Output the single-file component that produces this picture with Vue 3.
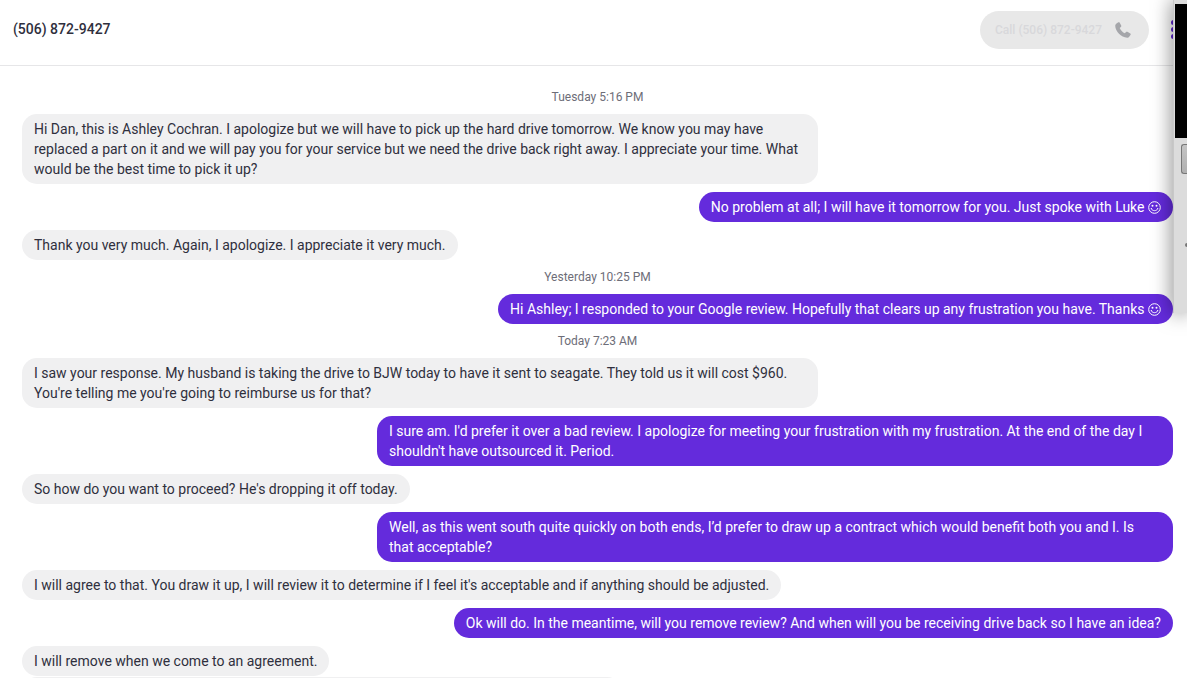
<script setup>
const phone = '(506) 872-9427'
const entries = [
  { kind: 'date', text: 'Tuesday 5:16 PM' },
  { kind: 'in', text: 'Hi Dan, this is Ashley Cochran. I apologize but we will have to pick up the hard drive tomorrow. We know you may have replaced a part on it and we will pay you for your service but we need the drive back right away. I appreciate your time. What would be the best time to pick it up?' },
  { kind: 'out', text: 'No problem at all; I will have it tomorrow for you. Just spoke with Luke', smile: true },
  { kind: 'in', text: 'Thank you very much. Again, I apologize. I appreciate it very much.' },
  { kind: 'date', text: 'Yesterday 10:25 PM' },
  { kind: 'out', text: 'Hi Ashley; I responded to your Google review. Hopefully that clears up any frustration you have. Thanks', smile: true },
  { kind: 'date', text: 'Today 7:23 AM' },
  { kind: 'in', text: "I saw your response. My husband is taking the drive to BJW today to have it sent to seagate. They told us it will cost $960. You're telling me you're going to reimburse us for that?" },
  { kind: 'out', text: "I sure am. I'd prefer it over a bad review. I apologize for meeting your frustration with my frustration. At the end of the day I shouldn't have outsourced it. Period." },
  { kind: 'in', text: "So how do you want to proceed? He's dropping it off today." },
  { kind: 'out', text: 'Well, as this went south quite quickly on both ends, I’d prefer to draw up a contract which would benefit both you and I. Is that acceptable?' },
  { kind: 'in', text: "I will agree to that. You draw it up, I will review it to determine if I feel it's acceptable and if anything should be adjusted." },
  { kind: 'out', text: 'Ok will do. In the meantime, will you remove review? And when will you be receiving drive back so I have an idea?' },
  { kind: 'in', text: 'I will remove when we come to an agreement.' },
  { kind: 'next', text: '' }
]
</script>

<template>
  <div class="app">
    <header class="header">
      <h1 class="title">{{ phone }}</h1>
      <button class="call" type="button" disabled>
        <span>Call {{ phone }}</span>
        <svg class="phone" viewBox="0 0 16 16" aria-hidden="true">
          <path d="M1.2 1.7 3.3.3C3.8 0 4.3.1 4.6.6L6.2 3.5C6.5 4 6.4 4.5 5.9 4.9L4.7 5.9C5.5 8 7.7 10.3 9.9 11.3L11 10C11.4 9.6 11.9 9.5 12.4 9.8L15.3 11.5C15.8 11.8 15.9 12.3 15.6 12.8L14.2 14.8C13.8 15.5 13 15.9 12.2 15.8C6 15.4.5 9.8.2 3.8C.2 3 .5 2.2 1.2 1.7Z" />
        </svg>
      </button>
      <button class="more" type="button" aria-label="More options"><i /><i /><i /></button>
    </header>

    <main class="thread">
      <template v-for="(entry, i) in entries" :key="i">
        <time v-if="entry.kind === 'date'" class="date">{{ entry.text }}</time>
        <p v-else class="bubble" :class="entry.kind">{{ entry.text }}<template v-if="entry.smile">&nbsp;<svg class="smile" viewBox="0 0 13 13" role="img" aria-label="smile">
            <circle class="line" cx="6.5" cy="6.5" r="5.8" />
            <path class="line" d="M3.4 7.7C4.3 10.3 8.7 10.3 9.6 7.7M2.8 7.7H4M9 7.7H10.2" />
            <circle cx="4.5" cy="4.7" r="1" /><circle cx="8.5" cy="4.7" r="1" />
          </svg></template></p>
      </template>
    </main>

    <aside class="window">
      <div class="screen"></div>
      <button class="key" type="button" aria-label="Window control"></button>
      <span class="knob"></span>
    </aside>
  </div>
</template>

<style>
body { margin: 0; background: #fff; }
</style>

<style scoped>
.app {
  position: relative;
  display: flex;
  flex-direction: column;
  height: 100vh;
  overflow: hidden;
  background: #fff;
  color: #2f2f3d;
  font-family: Roboto, "Liberation Sans", sans-serif;
  font-size: 14px;
  line-height: 20px;
}
.header {
  display: flex;
  flex: none;
  align-items: center;
  box-sizing: border-box;
  height: 66px;
  padding: 0 14px 6px 13px;
  border-bottom: 1px solid #e6e6e8;
}
.title {
  flex: 1;
  margin: 0;
  padding-bottom: 2px;
  font-size: 14px;
  font-weight: 500;
}
.call {
  display: flex;
  align-items: center;
  gap: 13px;
  height: 38px;
  padding: 0 18px 0 15px;
  border: 0;
  border-radius: 19px;
  background: #e8e8e8;
  color: #d8d8db;
  font: 500 12px/16px Roboto, "Liberation Sans", sans-serif;
}
.phone { width: 16px; height: 16px; fill: #a5a6aa; }
.more {
  display: flex;
  flex-direction: column;
  gap: 2px;
  width: 3px;
  margin-left: 22px;
  margin-right: -1px;
  padding: 0;
  border: 0;
  background: none;
}
.more i { width: 5px; height: 5px; border-radius: 50%; background: #5b22d0; }
.thread {
  display: flex;
  flex-direction: column;
  align-items: flex-start;
  gap: 8px;
  padding: 22px 14px 0 22px;
}
.date {
  align-self: center;
  color: #6d6d78;
  font-size: 12px;
  line-height: 18px;
}
.bubble {
  box-sizing: border-box;
  flex: none;
  max-width: 796px;
  margin: 0;
  padding: 5px 12px;
  border-radius: 15px;
}
.in, .next { background: #f0f0f1; }
.out { align-self: flex-end; background: #642bdc; color: #fff; }
.next { width: 600px; height: 30px; margin-top: -7px; }
.smile { width: 13px; height: 13px; vertical-align: -2px; fill: #fff; }
.line { fill: none; stroke: #fff; stroke-width: 1; }
.window {
  position: absolute;
  top: 0;
  right: 0;
  box-sizing: border-box;
  width: 14px;
  height: 313px;
  padding-top: 4px;
  border-left: 1px solid #c8c8c8;
  background: #dcdcdc;
  box-shadow: 0 0 20px rgba(0, 0, 0, 0.55);
}
.screen { height: 134px; margin-left: 1px; background: #000; }
.key {
  display: block;
  box-sizing: border-box;
  width: 6px;
  height: 30px;
  margin: 6px 0 0 7px;
  padding: 0;
  border: 1px solid #777;
  border-right: 0;
  border-radius: 3px 0 0 3px;
  background: linear-gradient(#c4c4c4, #b0b0b0);
}
.knob {
  display: block;
  width: 2px;
  height: 4px;
  margin: 69px 0 0 11px;
  border-radius: 2px 0 0 2px;
  background: #777;
}
</style>
